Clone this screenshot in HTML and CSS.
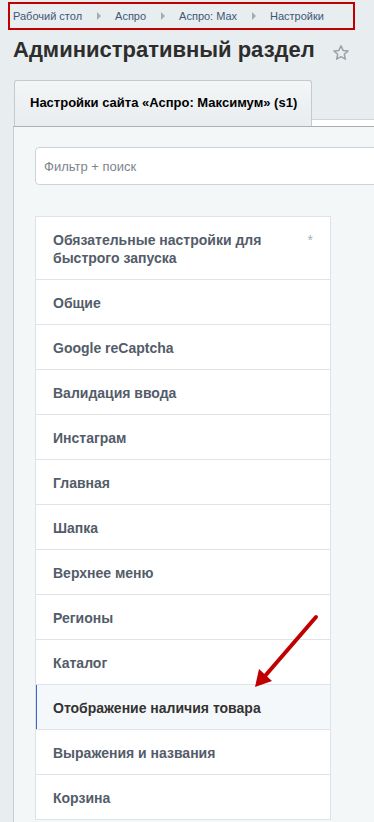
FILE: index.html
```html
<!DOCTYPE html>
<html lang="ru">
<head>
  <meta charset="UTF-8" />
  <title>Административный раздел</title>
  <link rel="stylesheet" href="styles.css">
</head>
<body>
  <div class="crumbs">
    <a href="#">Рабочий стол</a>
    <span class="crumb-sep"></span>
    <a href="#">Аспро</a>
    <span class="crumb-sep"></span>
    <a href="#">Аспро: Max</a>
    <span class="crumb-sep"></span>
    <a href="#">Настройки</a>
  </div>

  <div class="title">
    <h1>Административный раздел</h1>
    <svg class="star" width="18" height="18" viewBox="0 0 18 18">
      <path d="M9 1.8l2.1 4.6 5 .5-3.8 3.4 1.1 4.9L9 12.7l-4.4 2.5 1.1-4.9L1.9 6.9l5-.5z" fill="none" stroke="#9aa3a8" stroke-width="1.5" stroke-linejoin="round"/>
    </svg>
  </div>

  <div class="tabs">
    <div class="tab">Настройки сайта «Аспро: Максимум» (s1)</div>
    <div class="tabs-rest"></div>
  </div>

  <div class="panel">
    <input class="filter" type="text" placeholder="Фильтр + поиск" />

    <ul class="menu">
      <li class="menu-item first"><span>Обязательные настройки для быстрого запуска</span><i class="req">*</i></li>
      <li class="menu-item">Общие</li>
      <li class="menu-item">Google reCaptcha</li>
      <li class="menu-item">Валидация ввода</li>
      <li class="menu-item">Инстаграм</li>
      <li class="menu-item">Главная</li>
      <li class="menu-item">Шапка</li>
      <li class="menu-item">Верхнее меню</li>
      <li class="menu-item">Регионы</li>
      <li class="menu-item">Каталог</li>
      <li class="menu-item active">Отображение наличия товара</li>
      <li class="menu-item">Выражения и названия</li>
      <li class="menu-item">Корзина</li>
    </ul>
  </div>

  <!-- стрелка-подсказка -->
  <svg class="pointer" width="374" height="822" viewBox="0 0 374 822">
    <line x1="316" y1="617" x2="265" y2="676" stroke="#c00000" stroke-width="4" stroke-linecap="round"/>
    <polygon points="255,687 259,669 272,681" fill="#c00000"/>
  </svg>
</body>
</html>
```

FILE: styles.css
```css
html, body {
  overflow: hidden;
}
body {
  margin: 0;
  padding-top: 2px;
  font-family: 'Liberation Sans', Arial, sans-serif;
  background-color: #e8edef;
  position: relative;
}
.crumbs {
  display: flex;
  align-items: center;
  height: 24px;
  margin: 0 19px 0 8px;
  padding-left: 3px;
  border: 2px solid #c00000;
  font-size: 11px;
}
.crumbs a {
  color: #3d5777;
  text-decoration: none;
}
.crumb-sep {
  width: 0;
  height: 0;
  margin: 0 14px 0 15px;
  border-left: 4px solid #a6adb2;
  border-top: 4px solid transparent;
  border-bottom: 4px solid transparent;
}
.title {
  display: flex;
  align-items: center;
  margin: 7px 0 0 13px;
}
h1 {
  margin: 0;
  font-size: 22px;
  line-height: 26px;
  font-weight: bold;
  color: #2d2d2d;
}
.star {
  margin: 5px 0 0 17px;
}
.tabs {
  display: flex;
  margin-top: 17px;
  padding-left: 14px;
}
.tab {
  width: 281px;
  height: 45px;
  padding-left: 15px;
  line-height: 43px;
  border: 1px solid #c4cbcf;
  border-bottom: none;
  border-radius: 3px 3px 0 0;
  background: linear-gradient(#f3f5f6, #e9edef);
  font-size: 13px;
  font-weight: bold;
  color: #000;
}
.tabs-rest {
  flex: 1;
  margin-top: 39px;
  border-top: 1px solid #cfd5d8;
  background: #fff;
}
.panel {
  margin-left: 13px;
  padding: 20px 0 0 21px;
  border-top: 1px solid #a9b0b3;
  border-left: 1px solid #c6ccd0;
  background: #f4f7f8;
  height: 800px;
}
.filter {
  display: block;
  width: 400px;
  height: 38px;
  padding: 0 8px;
  box-sizing: border-box;
  border: 1px solid #ccd4d9;
  border-radius: 4px;
  background: #fff;
  font-family: inherit;
  font-size: 13px;
}
.filter::placeholder {
  color: #7d858b;
}
.menu {
  list-style: none;
  width: 296px;
  margin: 31px 0 0 0;
  padding: 0;
  box-sizing: border-box;
  border: 1px solid #dde3e7;
  border-bottom: none;
  background: #fff;
}
.menu-item {
  position: relative;
  padding: 14px 17px 12px;
  line-height: 18px;
  border-bottom: 1px solid #dde3e7;
  font-size: 14px;
  font-weight: bold;
  color: #535c69;
}
.menu-item.first {
  display: flex;
  justify-content: space-between;
  padding: 14px 17px 12px;
}
.menu-item.first span {
  max-width: 240px;
}
.req {
  font-style: normal;
  font-weight: normal;
  font-size: 14px;
  line-height: 14px;
  margin-top: 2px;
  color: #9fb3bd;
}
.menu-item.active {
  background: #f5f8fa;
  color: #333;
  box-shadow: inset 1px 0 0 #3b63d1;
}
.pointer {
  position: absolute;
  left: 0;
  top: 0;
  pointer-events: none;
}
```
